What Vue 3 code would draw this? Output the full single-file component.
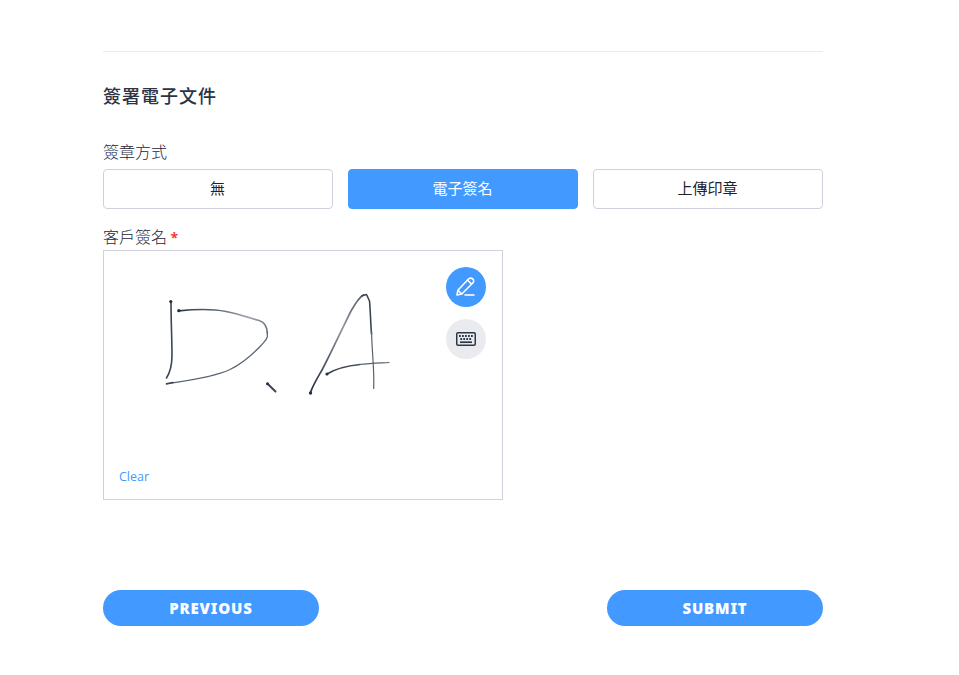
<script setup>
import { ref } from 'vue'

const methods = ['無', '電子簽名', '上傳印章']
const selected = ref(1)
const cleared = ref(false)
</script>

<template>
  <main class="page">
    <hr class="rule" />
    <h2 class="title">簽署電子文件</h2>

    <div class="label">簽章方式</div>
    <div class="methods">
      <button
        v-for="(m, i) in methods"
        :key="m"
        class="method"
        :class="{ active: i === selected }"
        @click="selected = i"
      >{{ m }}</button>
    </div>

    <div class="label sign-label">客戶簽名 <span class="required">*</span></div>
    <section class="pad">
      <svg v-if="!cleared" class="ink" viewBox="0 0 398 248">
        <defs>
          <linearGradient id="bowl" x1="74" y1="0" x2="164" y2="0" gradientUnits="userSpaceOnUse">
            <stop offset="0" stop-color="#2c3848" />
            <stop offset="0.4" stop-color="#5a6472" />
            <stop offset="0.8" stop-color="#a2a7ae" />
            <stop offset="1" stop-color="#6c747f" />
          </linearGradient>
          <linearGradient id="slope" x1="206" y1="142" x2="260" y2="44" gradientUnits="userSpaceOnUse">
            <stop offset="0" stop-color="#252f3f" />
            <stop offset="0.3" stop-color="#4d5665" />
            <stop offset="0.65" stop-color="#9298a1" />
            <stop offset="1" stop-color="#4d5665" />
          </linearGradient>
        </defs>
        <path class="s2" d="M67 51 C67 70 68 89 68 104 C68 113 67 120 62.5 127" />
        <path d="M74.500 59.800 C90 58.300 110 58 122 60.500 C135 63 144 66.500 155 69.500 C160.500 71 163 76 163.300 82" stroke="url(#bowl)" stroke-width="1.700" />
        <path class="s1" d="M163.300 81 V86 C162.500 89 160 91 157.500 94 C149 103 139 112 126 118.500 C109 126.500 83 129.500 62.500 133" />
        <path class="s2" d="M62.500 132.800 L69 131.500" />
        <path class="s3" d="M163.500 132.800 L171.500 140.500" />
        <path d="M206.500 141.500 C209 134 214 126 218 119 C227 102 237 80 247 60 C251 53 255 46 259.500 44" stroke="url(#slope)" stroke-width="1.700" />
        <path class="s2" d="M258 44.800 L262.500 43.500 L265.500 50 C266.500 60 266.500 71 267.500 83" />
        <path class="s1" d="M267.500 80 C268 103 270.500 118 269.700 137.500" />
        <path class="s2" d="M223 123 C232 117.500 246 114.500 256 113.500" />
        <path class="s1" d="M255 113.500 C267 112 275 112 285 111.500" />
        <g class="dots">
          <circle cx="66.800" cy="50.600" r="1.600" />
          <circle cx="74.800" cy="59.700" r="1.600" />
          <circle cx="163.500" cy="132.800" r="1.500" />
          <circle cx="206.500" cy="142" r="1.700" />
          <circle cx="223" cy="123" r="1.600" />
        </g>
      </svg>

      <div class="tools">
        <button class="tool draw" aria-label="Draw">
          <svg width="20" height="20" viewBox="0 0 20 20">
            <path d="M1 18 L1.900 13.300 L12.500 2 Q14.600 .2 16.700 1.900 Q18.600 3.900 16.800 6 L5.800 17 Z" />
            <path d="M11.600 3.200 L15.600 7.100 M2.200 13.500 L5.600 16.800" />
            <path d="M8.500 18 H18.500" />
          </svg>
        </button>
        <button class="tool type" aria-label="Keyboard">
          <svg width="20" height="14" viewBox="0 0 20 14">
            <rect class="frame" x=".75" y=".75" width="18.500" height="12.500" rx="1.200" />
            <path class="keys" d="M3 4 H17.500" />
            <path class="keys" d="M4.300 7 H16" />
            <path class="space" d="M4 10.200 H16" />
          </svg>
        </button>
      </div>

      <button class="clear" @click="cleared = true">Clear</button>
    </section>

    <footer class="actions">
      <button class="action">PREVIOUS</button>
      <button class="action">SUBMIT</button>
    </footer>
  </main>
</template>

<style>
body {
  background: #fff;
}
</style>

<style scoped>
* {
  box-sizing: border-box;
}

.page {
  width: 720px;
  margin-left: 103px;
  padding-top: 51px;
  color: #2c3345;
  font-family: "Noto Sans", "Noto Sans CJK TC", sans-serif;
}

button {
  margin: 0;
  padding: 0;
  border: 0;
  font-family: inherit;
  cursor: pointer;
}

.rule {
  height: 1px;
  margin: 0;
  border: 0;
  background: #e9eaed;
}

.title {
  margin: 29px 0 0;
  font-family: "Noto Sans CJK TC", sans-serif;
  font-size: 18px;
  font-weight: 500;
  line-height: 28px;
  letter-spacing: 1px;
}

.label {
  height: 24px;
  margin-top: 30px;
  color: #1c2436;
  font-family: "Noto Sans CJK TC", sans-serif;
  font-size: 16px;
  font-weight: 300;
  line-height: 24px;
  white-space: pre;
}

.methods {
  display: grid;
  grid-template-columns: repeat(3, 230px);
  gap: 15px;
  margin-top: 6px;
}

.method {
  height: 40px;
  padding: 0 1px 2px 0;
  border: 1px solid #d0d1dc;
  border-radius: 4px;
  background: #fff;
  color: #1c2330;
  font-size: 15px;
  font-weight: 400;
  line-height: 36px;
}

.method.active {
  border-color: #4299ff;
  background: #4299ff;
  color: #fff;
}

.sign-label {
  margin-top: 15px;
}

.required {
  color: #f23a3c;
  font-family: "Open Sans", sans-serif;
  font-size: 14px;
  font-weight: 700;
}

.pad {
  position: relative;
  display: flex;
  flex-direction: column;
  justify-content: space-between;
  width: 400px;
  height: 250px;
  margin-top: 2px;
  padding: 16px 16px 12px 15px;
  border: 1px solid #d0d1dc;
}

.ink {
  position: absolute;
  inset: 0;
  width: 398px;
  height: 248px;
  fill: none;
  stroke: #3a4555;
  stroke-linecap: round;
  stroke-linejoin: round;
}

.s1 {
  stroke: #596271;
  stroke-width: 1.2;
}

.s2 {
  stroke-width: 1.6;
}

.s3 {
  stroke-width: 2;
}

.dots {
  fill: #252f3f;
  stroke: none;
}

.tools {
  position: relative;
  display: flex;
  flex-direction: column;
  gap: 12px;
  align-self: flex-end;
}

.tool {
  display: grid;
  place-items: center;
  width: 40px;
  height: 40px;
  border-radius: 50%;
  background: #eaebef;
}

.tool svg {
  fill: none;
  stroke: #2c3848;
  stroke-width: 1.5;
}

.tool.draw {
  background: #4299ff;
}

.draw svg {
  stroke: #fff;
  stroke-width: 1.6;
  stroke-linejoin: round;
}

.tool .keys {
  stroke-width: 1.8;
  stroke-dasharray: 1.8 1.2;
}

.tool .space {
  stroke-width: 1.7;
}

.clear {
  position: relative;
  align-self: flex-start;
  background: none;
  color: #4299ff;
  font-family: "Open Sans", "Noto Sans", sans-serif;
  font-size: 12.5px;
  line-height: 20px;
}

.actions {
  display: flex;
  justify-content: space-between;
  margin-top: 90px;
}

.action {
  width: 216px;
  height: 36px;
  border-radius: 18px;
  background: #4299ff;
  color: #fff;
  font-size: 15px;
  font-weight: 900;
  line-height: 36px;
  letter-spacing: 0.85px;
}
</style>
